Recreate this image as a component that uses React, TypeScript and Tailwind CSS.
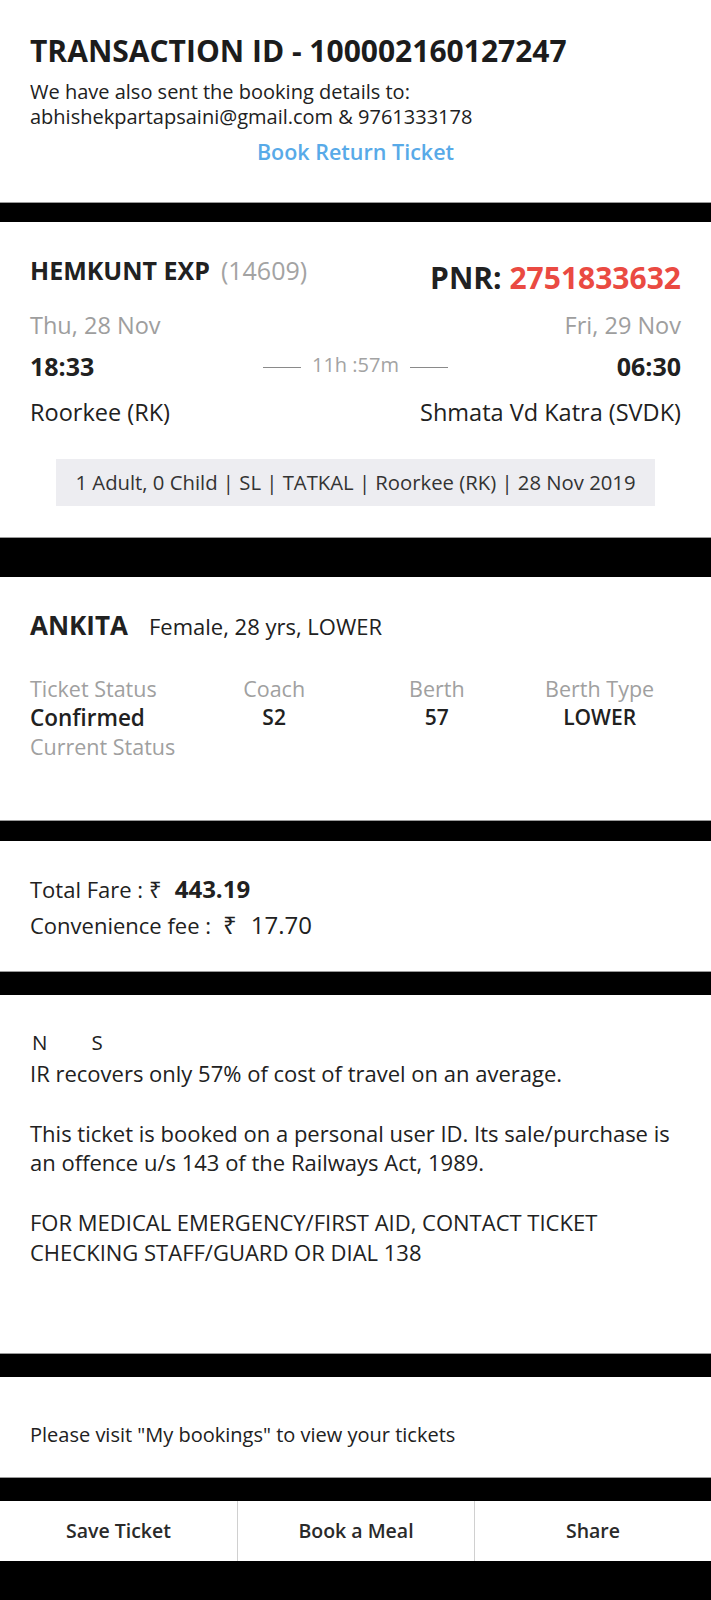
import React from 'react';

const Band = ({ h }: { h: string }) => (
  <div className={`${h} bg-black border-t border-[#9a9a9a]`} />
);

const App = () => {
  return (
    <div
      className="w-[711px] min-h-[1600px] bg-black text-[#212121]"
      style={{ fontFamily: '"Open Sans", "Noto Sans", sans-serif' }}
    >
      {/* Transaction header */}
      <div className="bg-white h-[202px] px-[30px] pt-[33px]">
        <h1 className="text-[30px] leading-[36px] font-bold text-[#1c1c1c]">
          TRANSACTION ID - 100002160127247
        </h1>
        <p className="mt-[10px] text-[20px] leading-[25px]">
          We have also sent the booking details to:
          <br />
          abhishekpartapsaini@gmail.com &amp; 9761333178
        </p>
        <div className="mt-[10px] text-center text-[21.5px] leading-[26px] font-semibold text-[#58aae8]">
          Book Return Ticket
        </div>
      </div>

      <Band h="h-[20px]" />

      {/* Train details */}
      <div className="bg-white h-[315px] px-[30px] pt-[33px]">
        <div className="flex justify-between items-start">
          <div className="text-[25px] leading-[30px]">
            <span className="font-bold">HEMKUNT EXP</span>
            <span className="text-[#a3a3a3] ml-[11px]">(14609)</span>
          </div>
          <div className="mt-[6px] text-[30px] leading-[34px] font-bold">
            PNR: <span className="text-[#ea4a42]">2751833632</span>
          </div>
        </div>
        <div className="mt-[16px] flex justify-between text-[23.5px] leading-[28px] text-[#9e9e9e]">
          <span>Thu, 28 Nov</span>
          <span>Fri, 29 Nov</span>
        </div>
        <div className="mt-[13px] flex justify-between items-center h-[30px]">
          <span className="text-[25px] font-bold">18:33</span>
          <div className="flex items-center gap-[11px] text-[20px] text-[#a3a3a3]">
            <span className="w-[38px] h-px bg-[#8a8a8a]" />
            <span className="mb-[4px]">11h :57m</span>
            <span className="w-[38px] h-px bg-[#8a8a8a]" />
          </div>
          <span className="text-[25px] font-bold">06:30</span>
        </div>
        <div className="mt-[15px] flex justify-between text-[23.5px] leading-[30px]">
          <span>Roorkee (RK)</span>
          <span>Shmata Vd Katra (SVDK)</span>
        </div>
        <div className="mt-[32px] mx-[26px] h-[47px] bg-[#ededf1] flex items-center justify-center text-[20.3px] text-[#333333]">
          1 Adult, 0 Child | SL | TATKAL | Roorkee (RK) | 28 Nov 2019
        </div>
      </div>

      <Band h="h-[40px]" />

      {/* Passenger */}
      <div className="bg-white h-[243px] px-[30px] pt-[33px]">
        <div className="flex items-baseline gap-[21px] leading-[30px]">
          <span className="text-[26px] font-bold">ANKITA</span>
          <span className="text-[22px]">Female, 28 yrs, LOWER</span>
        </div>
        <div className="mt-[33px] grid grid-cols-4 text-[21.5px] leading-[29px]">
          <span className="text-[#a0a0a0]">Ticket Status</span>
          <span className="text-[#a0a0a0] text-center">Coach</span>
          <span className="text-[#a0a0a0] text-center">Berth</span>
          <span className="text-[#a0a0a0] text-center">Berth Type</span>
          <span className="font-semibold text-[22.5px]">Confirmed</span>
          <span className="font-semibold text-center text-[21px]">S2</span>
          <span className="font-semibold text-center text-[21px]">57</span>
          <span className="font-semibold text-center text-[21px]">LOWER</span>
          <span className="text-[#a0a0a0] col-span-4">Current Status</span>
        </div>
      </div>

      <Band h="h-[21px]" />

      {/* Fare */}
      <div className="bg-white h-[130px] px-[30px] pt-[30px]">
        <div className="flex items-baseline leading-[36px]">
          <span className="text-[22px]">Total Fare :</span>
          <span className="text-[22px] ml-[6px]">₹</span>
          <span className="text-[24px] font-bold ml-[13px]">443.19</span>
        </div>
        <div className="flex items-baseline leading-[36px]">
          <span className="text-[22px]">Convenience fee :</span>
          <span className="text-[24px] ml-[12px]">₹</span>
          <span className="text-[24px] ml-[14px]">17.70</span>
        </div>
      </div>

      <Band h="h-[24px]" />

      {/* Notes */}
      <div className="bg-white h-[358px] px-[30px] pt-[32px]">
        <div className="flex gap-[44px] text-[20.5px] leading-[30px] pl-[2px]">
          <span>N</span>
          <span>S</span>
        </div>
        <p className="mt-[2px] text-[22px] leading-[29.8px]">
          IR recovers only 57% of cost of travel on an average.
        </p>
        <p className="mt-[29.8px] text-[22px] leading-[29.8px]">
          This ticket is booked on a personal user ID. Its sale/purchase is
          <br />
          an offence u/s 143 of the Railways Act, 1989.
        </p>
        <p className="mt-[29.8px] text-[22px] leading-[29.8px]">
          FOR MEDICAL EMERGENCY/FIRST AID, CONTACT TICKET
          <br />
          CHECKING STAFF/GUARD OR DIAL 138
        </p>
      </div>

      <Band h="h-[24px]" />

      <div className="bg-white h-[100px] px-[30px] pt-[43px]">
        <p className="text-[20px] leading-[30px]">
          Please visit "My bookings" to view your tickets
        </p>
      </div>

      <Band h="h-[24px]" />

      {/* Actions */}
      <div className="bg-white h-[60px] grid grid-cols-3 text-[19.5px] font-semibold text-[#2a2a2a]">
        <button className="flex items-center justify-center">Save Ticket</button>
        <button className="flex items-center justify-center border-l border-[#d0d0d0]">Book a Meal</button>
        <button className="flex items-center justify-center border-l border-[#d0d0d0]">Share</button>
      </div>
    </div>
  );
};

export default App;
